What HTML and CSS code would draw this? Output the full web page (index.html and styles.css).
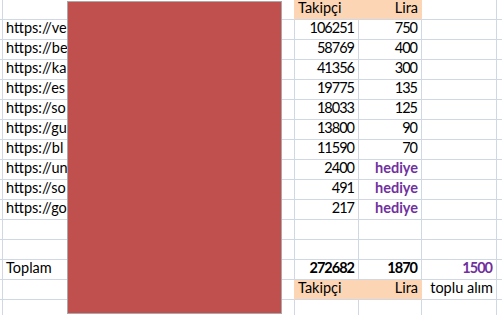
FILE: index.html
```html
<!DOCTYPE html>
<html>
<head>
<meta charset="utf-8">
<link rel="stylesheet" href="styles.css">
</head>
<body>
<div class="sheet">
  <div class="row peach-row">
    <div class="cell c0"></div><div class="cell ca"></div>
    <div class="cell cc fill">Takipçi</div><div class="cell cd fill num">Lira</div>
    <div class="cell ce"></div><div class="cell cf"></div>
  </div>
  <div class="row">
    <div class="cell c0"></div><div class="cell ca">https://ve</div>
    <div class="cell cc num digits">106251</div><div class="cell cd num digits">750</div>
    <div class="cell ce"></div><div class="cell cf"></div>
  </div>
  <div class="row">
    <div class="cell c0"></div><div class="cell ca">https://be</div>
    <div class="cell cc num digits">58769</div><div class="cell cd num digits">400</div>
    <div class="cell ce"></div><div class="cell cf"></div>
  </div>
  <div class="row">
    <div class="cell c0"></div><div class="cell ca">https://ka</div>
    <div class="cell cc num digits">41356</div><div class="cell cd num digits">300</div>
    <div class="cell ce"></div><div class="cell cf"></div>
  </div>
  <div class="row">
    <div class="cell c0"></div><div class="cell ca">https://es</div>
    <div class="cell cc num digits">19775</div><div class="cell cd num digits">135</div>
    <div class="cell ce"></div><div class="cell cf"></div>
  </div>
  <div class="row">
    <div class="cell c0"></div><div class="cell ca">https://so</div>
    <div class="cell cc num digits">18033</div><div class="cell cd num digits">125</div>
    <div class="cell ce"></div><div class="cell cf"></div>
  </div>
  <div class="row">
    <div class="cell c0"></div><div class="cell ca">https://gu</div>
    <div class="cell cc num digits">13800</div><div class="cell cd num digits">90</div>
    <div class="cell ce"></div><div class="cell cf"></div>
  </div>
  <div class="row">
    <div class="cell c0"></div><div class="cell ca">https://bl</div>
    <div class="cell cc num digits">11590</div><div class="cell cd num digits">70</div>
    <div class="cell ce"></div><div class="cell cf"></div>
  </div>
  <div class="row">
    <div class="cell c0"></div><div class="cell ca">https://un</div>
    <div class="cell cc num digits">2400</div><div class="cell cd num gift">hediye</div>
    <div class="cell ce"></div><div class="cell cf"></div>
  </div>
  <div class="row">
    <div class="cell c0"></div><div class="cell ca">https://so</div>
    <div class="cell cc num digits">491</div><div class="cell cd num gift">hediye</div>
    <div class="cell ce"></div><div class="cell cf"></div>
  </div>
  <div class="row">
    <div class="cell c0"></div><div class="cell ca">https://go</div>
    <div class="cell cc num digits">217</div><div class="cell cd num gift">hediye</div>
    <div class="cell ce"></div><div class="cell cf"></div>
  </div>
  <div class="row">
    <div class="cell c0"></div><div class="cell ca"></div>
    <div class="cell cc"></div><div class="cell cd"></div>
    <div class="cell ce"></div><div class="cell cf"></div>
  </div>
  <div class="row">
    <div class="cell c0"></div><div class="cell ca"></div>
    <div class="cell cc"></div><div class="cell cd"></div>
    <div class="cell ce"></div><div class="cell cf"></div>
  </div>
  <div class="row">
    <div class="cell c0"></div><div class="cell ca">Toplam</div>
    <div class="cell cc num digits bold">272682</div><div class="cell cd num digits bold">1870</div>
    <div class="cell ce num digits gift">1500</div><div class="cell cf"></div>
  </div>
  <div class="row peach-row">
    <div class="cell c0"></div><div class="cell ca"></div>
    <div class="cell cc fill">Takipçi</div><div class="cell cd fill num">Lira</div>
    <div class="cell ce num">toplu alım</div><div class="cell cf"></div>
  </div>
  <div class="row">
    <div class="cell c0"></div><div class="cell ca"></div>
    <div class="cell cc"></div><div class="cell cd"></div>
    <div class="cell ce"></div><div class="cell cf"></div>
  </div>
  <div class="mask"></div>
</div>
</body>
</html>
```
FILE: styles.css
```css
html, body {
  margin: 0;
  padding: 0;
  background: #ffffff;
}
body {
  width: 502px;
  height: 315px;
  overflow: hidden;
  font-family: "Lato", "Liberation Sans", sans-serif;
  font-size: 14.5px;
  color: #000000;
}
.sheet {
  position: relative;
  width: 502px;
}
.row {
  display: flex;
  height: 20px;
}
.cell {
  box-sizing: border-box;
  height: 20px;
  border-right: 1px solid #d0d7e5;
  border-bottom: 1px solid #d0d7e5;
  display: flex;
  align-items: flex-end;
  padding: 0 3px 3px 3px;
  line-height: 16px;
  white-space: nowrap;
  overflow: hidden;
  flex: none;
}
.c0 { width: 3px; padding: 0; }
.ca { width: 292px; padding-left: 3px; }
.cc { width: 64px; }
.cd { width: 63px; }
.ce { width: 75px; }
.cf { width: 5px; padding: 0; border-right: none; }
.num { justify-content: flex-end; }
.digits { letter-spacing: -1px; padding-right: 4px; }
.bold { font-weight: 700; }
.gift { font-weight: 700; color: #7030a0; }
.fill {
  background: #fcd5b4;
  border-right-color: #fcd5b4;
}
.peach-row .ca { border-right-color: #fcd5b4; }
.mask {
  position: absolute;
  left: 67px;
  top: 1px;
  width: 215px;
  height: 313px;
  box-sizing: border-box;
  background: #c0504d;
  border: 1px solid #a9a9a9;
}
```
